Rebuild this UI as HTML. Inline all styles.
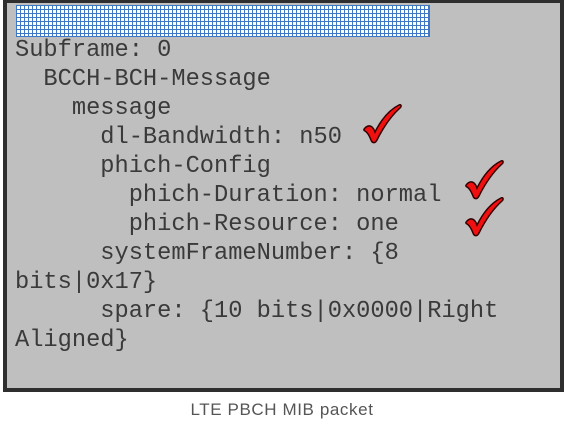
<!DOCTYPE html>
<html><head><style>
html,body{margin:0;padding:0;background:#fff;width:564px;height:438px;overflow:hidden}
.box{position:absolute;left:3px;top:0;width:553px;height:385px;border:4px solid #2e2e2e;border-top-width:3px;background:#bfbfbf}
.grid{position:absolute;left:16px;top:5px;width:414px;height:32px;background-color:#fff;
background-image:linear-gradient(to right,#3d78c8 1px,transparent 1px),linear-gradient(to bottom,#3d78c8 1px,transparent 1px);
background-size:4px 4px;border-right:1px solid #3d78c8;border-bottom:1px solid #3d78c8;box-sizing:border-box}
pre{position:absolute;left:15px;top:36px;margin:0;font-family:"Liberation Mono",monospace;font-size:23.7px;line-height:29px;color:#3a3a3a;white-space:pre}
.cap{position:absolute;left:0;width:564px;top:400px;text-align:center;font-family:"Liberation Sans",sans-serif;font-size:17px;letter-spacing:0.6px;color:#555}
svg{position:absolute}
</style></head><body>
<div class="box"></div>
<div class="grid"></div>
<pre>Subframe: 0
  BCCH-BCH-Message
    message
      dl-Bandwidth: n50
      phich-Config
        phich-Duration: normal
        phich-Resource: one
      systemFrameNumber: {8
bits|0x17}
      spare: {10 bits|0x0000|Right
Aligned}</pre>
<svg width="0" height="0"><defs><path id="ck" d="M2 24 C6 20 10 22 12 28 C18 16 26 6 36 1 C38 0 39 2 37 4 C28 12 20 24 14 36 C12 40 9 39 8 36 C6 31 4 28 2 27 C0 26 1 25 2 24 Z" fill="#f01010" stroke="#300" stroke-width="1.5"/></defs></svg>
<svg style="left:363px;top:104px" width="40" height="42" viewBox="0 0 40 42"><use href="#ck"/></svg>
<svg style="left:465px;top:160px" width="40" height="42" viewBox="0 0 40 42"><use href="#ck"/></svg>
<svg style="left:465px;top:197px" width="40" height="42" viewBox="0 0 40 42"><use href="#ck"/></svg>
<div class="cap">LTE PBCH MIB packet</div>
</body></html>
